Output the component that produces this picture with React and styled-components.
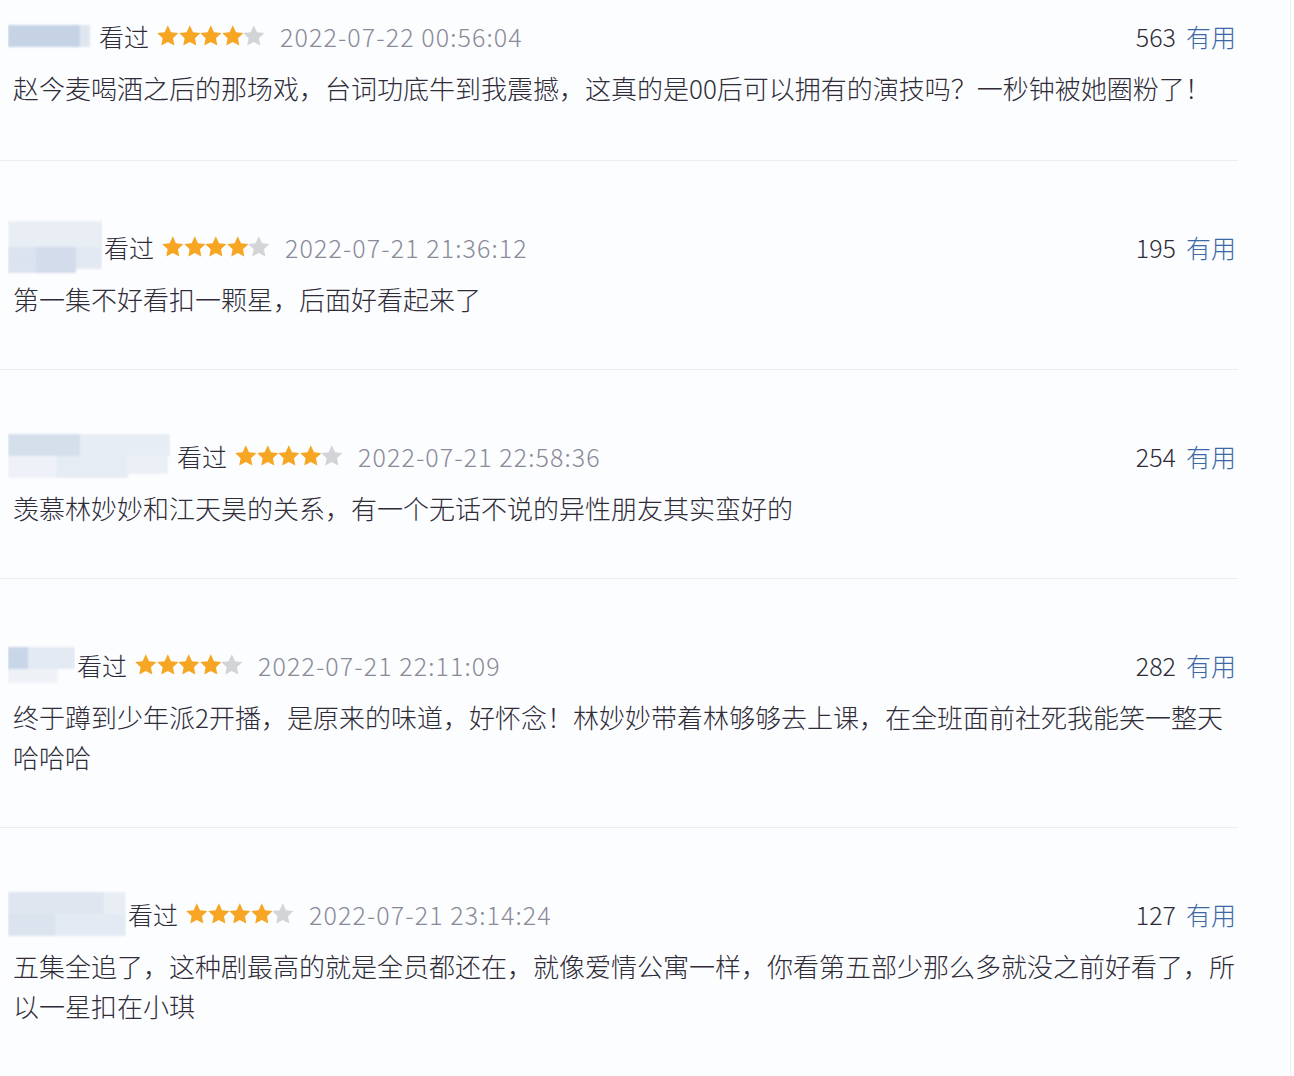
import React from 'react';
import styled, { createGlobalStyle } from 'styled-components';

const GlobalStyle = createGlobalStyle`
	html, body {
		margin: 0;
		padding: 0;
		background: #fcfdff;
	}
	body {
		font-family: "Noto Sans CJK SC", "Noto Sans", sans-serif;
		color: #2f2c38;
	}
`;

// username mosaics (they are pixelated in the screenshot)
const reviews = [
	{
		id: 1,
		blur: { w: 89, h: 26, rects: [[0, 2, 72, 22, '#c6d3e5'], [72, 2, 10, 22, '#dfe6f0']] },
		date: '2022-07-22 00:56:04',
		useful: 563,
		text: '赵今麦喝酒之后的那场戏，台词功底牛到我震撼，这真的是00后可以拥有的演技吗？一秒钟被她圈粉了！',
		first: true,
	},
	{
		id: 2,
		blur: {
			w: 94,
			h: 56,
			rects: [
				[0, 2, 96, 26, '#e9eef5'],
				[0, 28, 28, 26, '#dbe3ee'],
				[28, 28, 40, 26, '#d2dcea'],
				[68, 28, 26, 22, '#e3e9f2'],
			],
		},
		date: '2022-07-21 21:36:12',
		useful: 195,
		text: '第一集不好看扣一颗星，后面好看起来了',
	},
	{
		id: 3,
		blur: {
			w: 167,
			h: 48,
			rects: [
				[0, 2, 72, 22, '#d5dfeb'],
				[72, 2, 90, 22, '#e7edf5'],
				[0, 24, 48, 22, '#eef2f8'],
				[48, 24, 72, 22, '#e6ecf4'],
				[120, 24, 40, 18, '#ebf0f6'],
			],
		},
		date: '2022-07-21 22:58:36',
		useful: 254,
		text: '羡慕林妙妙和江天昊的关系，有一个无话不说的异性朋友其实蛮好的',
	},
	{
		id: 4,
		blur: {
			w: 67,
			h: 40,
			rects: [
				[0, 2, 20, 22, '#c9d6e8'],
				[20, 2, 47, 22, '#e3eaf3'],
				[0, 24, 50, 14, '#eef2f7'],
			],
		},
		date: '2022-07-21 22:11:09',
		useful: 282,
		text: '终于蹲到少年派2开播，是原来的味道，好怀念！林妙妙带着林够够去上课，在全班面前社死我能笑一整天哈哈哈',
	},
	{
		id: 5,
		blur: {
			w: 118,
			h: 48,
			rects: [
				[0, 2, 96, 22, '#dfe6f0'],
				[96, 2, 22, 22, '#e9eef5'],
				[0, 24, 48, 22, '#dbe3ee'],
				[48, 24, 70, 22, '#e4eaf3'],
			],
		},
		date: '2022-07-21 23:14:24',
		useful: 127,
		text: '五集全追了，这种剧最高的就是全员都还在，就像爱情公寓一样，你看第五部少那么多就没之前好看了，所以一星扣在小琪',
	},
];

const Star = ({ on }) => (
	<svg width='21.6' height='21' viewBox='1.6 1.6 20.8 20'>
		<path
			d='M12 1.8l3.1 6.6 7.1.9-5.2 4.9 1.3 7.1L12 17.9l-6.3 3.4 1.3-7.1L1.8 9.3l7.1-.9z'
			fill={on ? '#f7a623' : '#d3d4d8'}
		/>
	</svg>
);

const Mosaic = ({ w, h, rects, id }) => (
	<BlurBox width={w} height={h} viewBox={`0 0 ${w} ${h}`}>
		<defs>
			<filter id={`soft${id}`} x='-10%' y='-10%' width='120%' height='120%'>
				<feGaussianBlur stdDeviation='1.2' />
			</filter>
		</defs>
		<g filter={`url(#soft${id})`}>
			{rects.map(([x, y, rw, rh, c], i) => (
				<rect key={i} x={x} y={y} width={rw} height={rh} fill={c} />
			))}
		</g>
	</BlurBox>
);

const App = () => {
	return (
		<Page>
			<GlobalStyle />
			<List>
				{reviews.map((r) => (
					<Item key={r.id} first={r.first}>
						<Header>
							<Left>
								<Mosaic id={r.id} {...r.blur} />
								<Watched>看过</Watched>
								<Stars>
									{[1, 2, 3, 4, 5].map((n) => (
										<Star key={n} on={n <= 4} />
									))}
								</Stars>
								<Time>{r.date}</Time>
							</Left>
							<Useful>
								<Count>{r.useful}</Count>
								<UsefulLink>有用</UsefulLink>
							</Useful>
						</Header>
						<Comment>{r.text}</Comment>
					</Item>
				))}
			</List>
		</Page>
	);
};

const Page = styled.div`
	width: 1290px;
	min-height: 1076px;
	border-right: 1px solid #edf0f4;
	background: #fcfdff;
`;

const List = styled.div`
	width: 1238px;
`;

const Item = styled.div`
	padding: ${(p) => (p.first ? '18px 2px 52px 0' : '68px 2px 50px 0')};
	border-bottom: 1px solid #eaedf2;
`;

const Header = styled.div`
	height: 36px;
	display: flex;
	align-items: center;
	justify-content: space-between;
	font-size: 25px;
	font-weight: 300;
	line-height: 36px;
`;

const Left = styled.div`
	height: 36px;
	display: flex;
	align-items: center;
	padding-left: 8px;
`;

const BlurBox = styled.svg`
	flex-shrink: 0;
	display: block;
	margin-right: 2px;
`;

const Watched = styled.span`
	color: #2f2c38;
	margin-right: 8px;
`;

const Stars = styled.span`
	display: flex;
	align-items: center;
	margin-right: 15px;
	margin-top: -2px;
`;

const Time = styled.span`
	color: #8b8a98;
	letter-spacing: 1.1px;
`;

const Useful = styled.div`
	display: flex;
	align-items: center;
	gap: 10px;
`;

const Count = styled.span`
	color: #2f2c38;
`;

const UsefulLink = styled.span`
	color: #3d68a6;
`;

const Comment = styled.p`
	margin: 14px 0 0 13px;
	max-width: 1226px;
	font-size: 26px;
	font-weight: 300;
	line-height: 40px;
	color: #2f2c38;
`;

export default App;
